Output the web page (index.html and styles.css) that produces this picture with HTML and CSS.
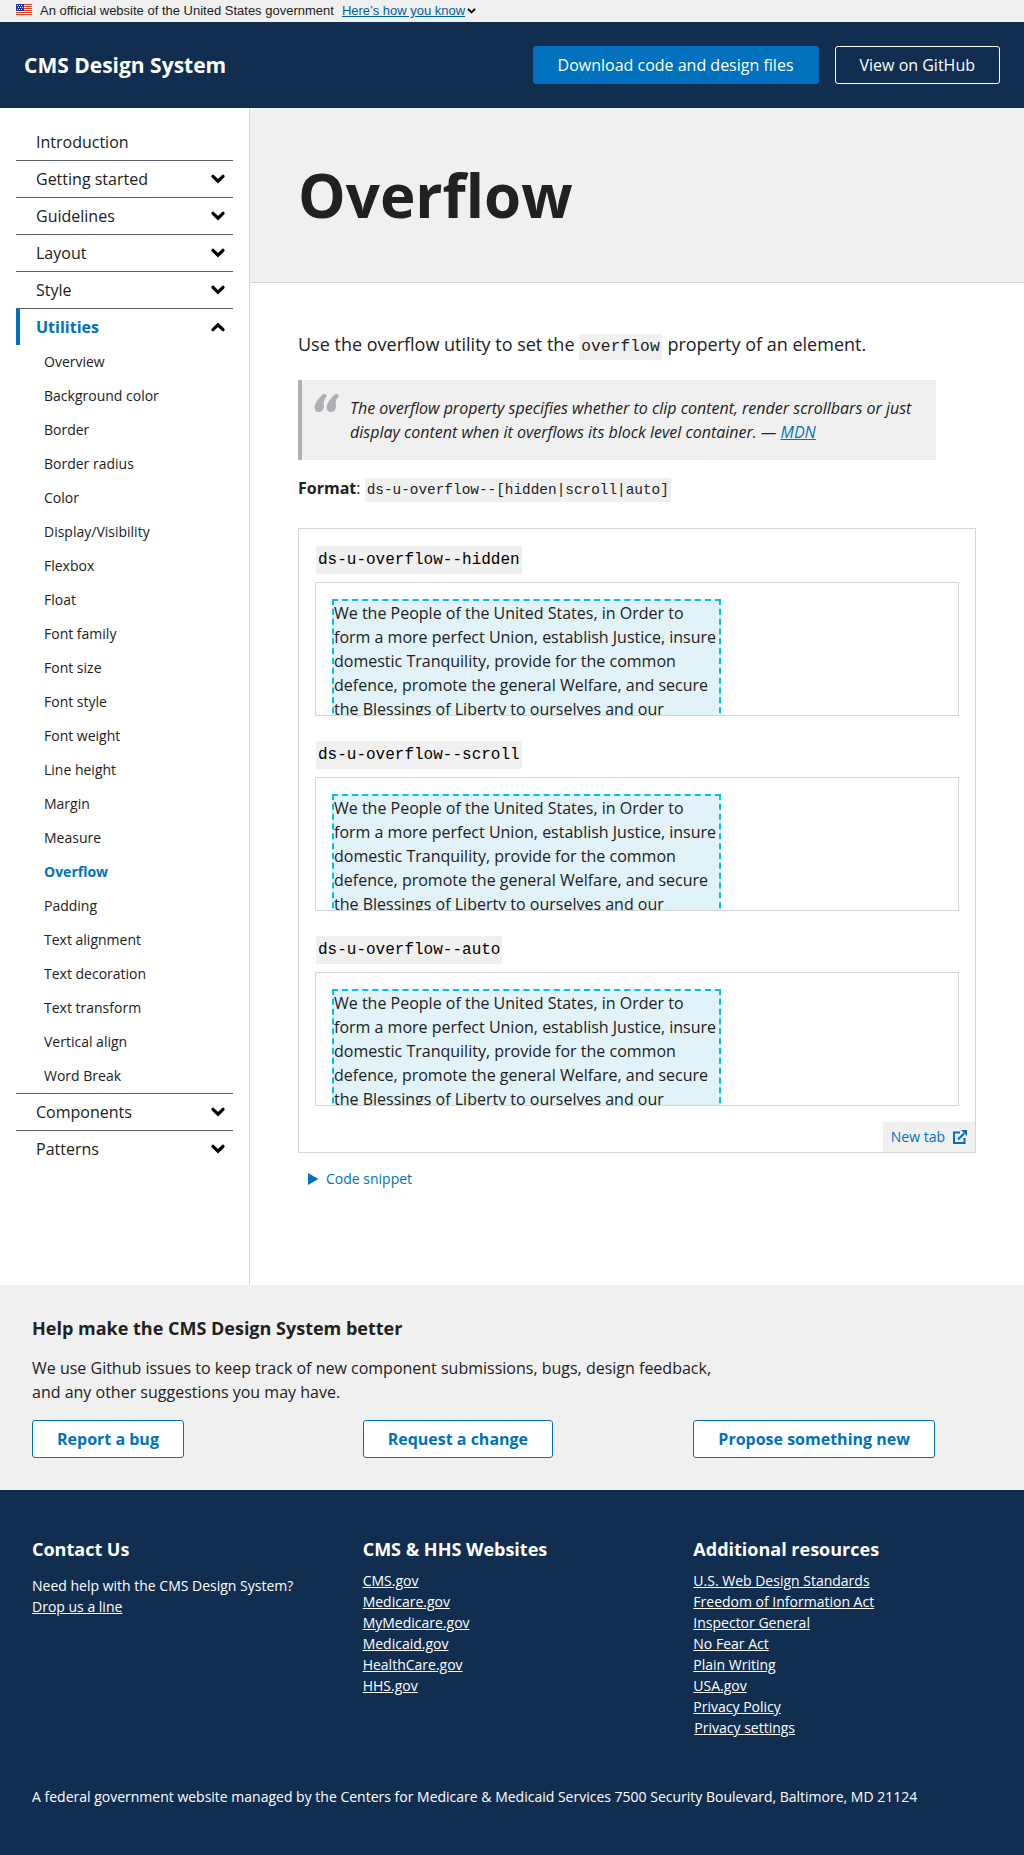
FILE: index.html
```html
<!DOCTYPE html>
<html lang="en">
<head>
<meta charset="utf-8">
<title>Overflow - CMS Design System</title>
<link rel="stylesheet" href="styles.css">
</head>
<body>
<svg class="sprite" width="0" height="0" aria-hidden="true">
  <symbol id="chevron" viewBox="0 0 14 10"><path d="M2 2.3 7 7.2l5-4.9" fill="none" stroke="currentColor" stroke-width="3.2" stroke-linecap="round"/></symbol>
</svg>

<div class="gov-banner">
  <svg class="flag" viewBox="0 0 16 11" aria-hidden="true">
    <rect width="16" height="11" fill="#fff"/>
    <path d="M0 .5h16M0 2.5h16M0 4.5h16M0 6.5h16M0 8.5h16M0 10.5h16" stroke="#db3e1f"/>
    <rect width="8" height="7" fill="#1e33b1"/>
    <path d="M1 1.5h1M3 1.5h1M5 1.5h1M2 3.5h1M4 3.5h1M6 3.5h1M1 5.5h1M3 5.5h1M5 5.5h1" stroke="#fff"/>
  </svg>
  <span class="gov-text">An official website of the United States government</span>
  <a class="gov-link" href="#">Here’s how you know</a>
  <svg class="gov-chevron"><use href="#chevron"/></svg>
</div>

<header class="site-header">
  <a class="site-title" href="#">CMS Design System</a>
  <div class="header-actions">
    <a class="button button-primary" href="#">Download code and design files</a>
    <a class="button button-inverse" href="#">View on GitHub</a>
  </div>
</header>

<div class="layout">
  <nav class="sidebar">
    <ul class="nav">
      <li class="nav-item"><a class="nav-link" href="#">Introduction</a></li>
      <li class="nav-item"><a class="nav-link" href="#">Getting started<svg class="chevron"><use href="#chevron"/></svg></a></li>
      <li class="nav-item"><a class="nav-link" href="#">Guidelines<svg class="chevron"><use href="#chevron"/></svg></a></li>
      <li class="nav-item"><a class="nav-link" href="#">Layout<svg class="chevron"><use href="#chevron"/></svg></a></li>
      <li class="nav-item"><a class="nav-link" href="#">Style<svg class="chevron"><use href="#chevron"/></svg></a></li>
      <li class="nav-item">
        <a class="nav-link nav-link-current" href="#">Utilities<svg class="chevron chevron-up"><use href="#chevron"/></svg></a>
        <ul class="subnav">
          <li><a href="#">Overview</a></li>
          <li><a href="#">Background color</a></li>
          <li><a href="#">Border</a></li>
          <li><a href="#">Border radius</a></li>
          <li><a href="#">Color</a></li>
          <li><a href="#">Display/Visibility</a></li>
          <li><a href="#">Flexbox</a></li>
          <li><a href="#">Float</a></li>
          <li><a href="#">Font family</a></li>
          <li><a href="#">Font size</a></li>
          <li><a href="#">Font style</a></li>
          <li><a href="#">Font weight</a></li>
          <li><a href="#">Line height</a></li>
          <li><a href="#">Margin</a></li>
          <li><a href="#">Measure</a></li>
          <li><a class="current" href="#">Overflow</a></li>
          <li><a href="#">Padding</a></li>
          <li><a href="#">Text alignment</a></li>
          <li><a href="#">Text decoration</a></li>
          <li><a href="#">Text transform</a></li>
          <li><a href="#">Vertical align</a></li>
          <li><a href="#">Word Break</a></li>
        </ul>
      </li>
      <li class="nav-item"><a class="nav-link" href="#">Components<svg class="chevron"><use href="#chevron"/></svg></a></li>
      <li class="nav-item"><a class="nav-link" href="#">Patterns<svg class="chevron"><use href="#chevron"/></svg></a></li>
    </ul>
  </nav>

  <main class="main">
    <div class="page-header"><h1>Overflow</h1></div>
    <div class="content">
      <p class="lead">Use the overflow utility to set the <code>overflow</code> property of an element.</p>
      <blockquote class="quote">
        <svg class="quote-mark" viewBox="0 0 26 20" aria-hidden="true">
          <path id="mark" d="M10 .4 13 2.6C10.800 6 9.300 8.600 9.700 11.200 10.600 14.500 9 19 4.900 19 2 19 .6 17 .6 14.500.6 9.500 5.500 4 10 .4z"/>
          <use href="#mark" x="12"/>
        </svg>
        <p>The overflow property specifies whether to clip content, render scrollbars or just display content when it overflows its block level container. — <a href="#">MDN</a></p>
      </blockquote>
      <p class="format"><strong>Format</strong>: <code>ds-u-overflow--[hidden|scroll|auto]</code></p>

      <div class="example">
        <section class="demo">
          <code>ds-u-overflow--hidden</code>
          <div class="demo-box"><div class="demo-text">We the People of the United States, in Order to form a more perfect Union, establish Justice, insure domestic Tranquility, provide for the common defence, promote the general Welfare, and secure the Blessings of Liberty to ourselves and our</div></div>
        </section>
        <section class="demo">
          <code>ds-u-overflow--scroll</code>
          <div class="demo-box"><div class="demo-text">We the People of the United States, in Order to form a more perfect Union, establish Justice, insure domestic Tranquility, provide for the common defence, promote the general Welfare, and secure the Blessings of Liberty to ourselves and our</div></div>
        </section>
        <section class="demo">
          <code>ds-u-overflow--auto</code>
          <div class="demo-box"><div class="demo-text">We the People of the United States, in Order to form a more perfect Union, establish Justice, insure domestic Tranquility, provide for the common defence, promote the general Welfare, and secure the Blessings of Liberty to ourselves and our</div></div>
        </section>
        <a class="new-tab" href="#">New tab
          <svg viewBox="0 0 14 14" aria-hidden="true"><path d="M7 2.500H1V13h10.500V8" fill="none" stroke="currentColor" stroke-width="2"/><path d="M5 9.500 11 3.500" stroke="currentColor" stroke-width="2.200"/><path d="M8 0H14v6z" fill="currentColor"/></svg>
        </a>
      </div>
      <a class="snippet" href="#"><svg viewBox="0 0 10 12" aria-hidden="true"><path d="M0 0 10.500 6 0 12z" fill="currentColor"/></svg>Code snippet</a>
    </div>
  </main>
</div>

<section class="feedback">
  <h2>Help make the CMS Design System better</h2>
  <p>We use Github issues to keep track of new component submissions, bugs, design feedback, and any other suggestions you may have.</p>
  <div class="columns">
    <div><a class="button button-outline" href="#">Report a bug</a></div>
    <div><a class="button button-outline" href="#">Request a change</a></div>
    <div><a class="button button-outline" href="#">Propose something new</a></div>
  </div>
</section>

<footer class="footer">
  <div class="columns">
    <div>
      <h2>Contact Us</h2>
      <p class="contact">Need help with the CMS Design System?<br><a href="#">Drop us a line</a></p>
    </div>
    <div>
      <h2>CMS &amp; HHS Websites</h2>
      <ul>
        <li><a href="#">CMS.gov</a></li>
        <li><a href="#">Medicare.gov</a></li>
        <li><a href="#">MyMedicare.gov</a></li>
        <li><a href="#">Medicaid.gov</a></li>
        <li><a href="#">HealthCare.gov</a></li>
        <li><a href="#">HHS.gov</a></li>
      </ul>
    </div>
    <div>
      <h2>Additional resources</h2>
      <ul>
        <li><a href="#">U.S. Web Design Standards</a></li>
        <li><a href="#">Freedom of Information Act</a></li>
        <li><a href="#">Inspector General</a></li>
        <li><a href="#">No Fear Act</a></li>
        <li><a href="#">Plain Writing</a></li>
        <li><a href="#">USA.gov</a></li>
        <li><a href="#">Privacy Policy</a></li>
        <li class="privacy"><a href="#">Privacy settings</a></li>
      </ul>
    </div>
  </div>
  <p class="legal">A federal government website managed by the Centers for Medicare &amp; Medicaid Services 7500 Security Boulevard, Baltimore, MD 21124</p>
</footer>
</body>
</html>
```
FILE: styles.css
```css
* { box-sizing: border-box; }
body {
  margin: 0;
  background: #fff;
  color: #212121;
  font: 16px/24px "Open Sans", sans-serif;
}
h1, h2, p, ul, blockquote { margin: 0; padding: 0; }
ul { list-style: none; }
a { color: #0071bc; }
svg { display: block; flex: none; }
.sprite { display: none; }
code {
  padding: 4px 2px;
  background: #f0f0f0;
  font: .9em/1.5 "Liberation Mono", monospace;
}

.gov-banner {
  display: flex;
  align-items: center;
  height: 22px;
  padding: 0 16px;
  background: #f0f0f0;
  font: 13px/16px "Liberation Sans", sans-serif;
}
.flag { width: 16px; height: 11px; margin: 0 8px 3px 0; }
.gov-link { margin-left: 8px; color: #005ea2; }
.gov-chevron { width: 9px; height: 6px; margin-left: 2px; color: #000; }

.site-header {
  display: flex;
  align-items: center;
  justify-content: space-between;
  height: 86px;
  padding: 0 24px;
  background: #112e51;
}
.site-title { color: #fff; font-size: 21px; font-weight: 700; text-decoration: none; }
.header-actions { display: flex; gap: 16px; }
.button {
  display: inline-block;
  height: 38px;
  padding: 6px 24px;
  border: 1px solid #0071bc;
  border-radius: 3px;
  text-decoration: none;
  white-space: nowrap;
}
.button-primary { background: #0071bc; color: #fff; }
.button-inverse { border-color: #fff; color: #fff; }
.button-outline { background: #fff; font-weight: 700; }

.layout { display: flex; height: 1177px; }
.sidebar { width: 250px; padding: 15px 16px 0; border-right: 1px solid #d6d7d9; }
.nav-item { border-top: 1px solid #5b616b; }
.nav-item:first-child { border-top-color: transparent; }
.nav-link {
  display: flex;
  align-items: center;
  justify-content: space-between;
  height: 36px;
  padding: 0 8px 0 20px;
  color: #212121;
  text-decoration: none;
}
.nav-link-current { padding-left: 16px; border-left: 4px solid #0071bc; color: #0071bc; font-weight: 700; }
.chevron { width: 14px; height: 10px; color: #000; }
.chevron-up { transform: scaleY(-1); }
.subnav a {
  display: block;
  padding-left: 28px;
  color: #212121;
  font-size: 14px;
  line-height: 34px;
  text-decoration: none;
}
.subnav .current { color: #0071bc; font-weight: 700; }

.main { flex: 1; }
.page-header {
  display: flex;
  align-items: center;
  height: 175px;
  padding-left: 48px;
  border-bottom: 1px solid #d6d7d9;
  background: #f0f0f0;
}
.page-header h1 { font-size: 60px; line-height: 78px; }
.content { padding: 48px; }
.lead { height: 28px; font-size: 18px; line-height: 27px; }
.lead code { margin-right: 1px; letter-spacing: .1px; }
.quote {
  display: flex;
  gap: 10px;
  width: 638px;
  margin: 21px 0 16px;
  padding: 16px 16px 16px 12px;
  border-left: 4px solid #aeb0b5;
  background: #f0f0f0;
  font-style: italic;
}
.quote-mark { width: 26px; height: 20px; margin-top: -3px; fill: #aeb0b5; }
.format { height: 24px; margin-bottom: 28px; }

.example {
  display: flex;
  flex-direction: column;
  width: 678px;
  height: 625px;
  padding: 17px 16px 0;
  border: 1px solid #d6d7d9;
}
.demo { flex: none; margin-bottom: 25px; }
.demo:nth-of-type(3) { margin-bottom: 0; }
.demo code { display: block; width: fit-content; margin-left: 1px; font-size: 16px; line-height: 20px; color: #000; }
.demo-box { height: 134px; margin-top: 8px; padding: 16px; border: 1px solid #d6d7d9; overflow: hidden; }
.demo-text { width: 389px; border: 2px dashed #02bfe7; background: #e1f3f8; }
.new-tab {
  display: flex;
  align-items: center;
  align-self: flex-end;
  gap: 8px;
  height: 30px;
  margin: auto -16px 0 0;
  padding: 0 8px;
  background: #f0f0f0;
  font-size: 14px;
  text-decoration: none;
}
.new-tab svg { width: 14px; height: 14px; }
.snippet {
  display: flex;
  align-items: center;
  gap: 8px;
  margin-top: 14px;
  padding-left: 10px;
  font-size: 14px;
  text-decoration: none;
}
.snippet svg { width: 10px; height: 12px; }

.columns { display: grid; grid-template-columns: repeat(3, 1fr); margin-right: -32px; }
.feedback { height: 205px; padding: 30px 32px 0; background: #f0f0f0; }
.feedback h2, .footer h2 { font-size: 18px; line-height: 27px; }
.feedback p { width: 690px; margin: 14px 0 16px; }

.footer { height: 365px; padding: 46px 32px 0; background: #112e51; color: #fff; font-size: 14px; line-height: 21px; }
.footer a { color: #fff; }
.footer .contact { margin-top: 12px; }
.footer ul { margin-top: 7px; }
.privacy { padding-left: 1px; }
.legal { margin-top: 48px; }
```
